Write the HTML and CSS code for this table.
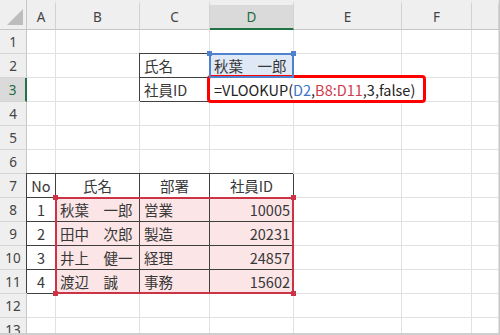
FILE: index.html
```html
<!DOCTYPE html>
<html lang="ja">
<head>
<meta charset="utf-8">
<link rel="stylesheet" href="styles.css">
</head>
<body>
<div class="sheet">
  <div class="grid cells">
    <div class="corner"><svg width="27" height="30" viewBox="0 0 27 30"><polygon points="7,25 23,25 23,9" fill="#bdbdbd"/></svg></div>
    <div class="ch">A</div><div class="ch">B</div><div class="ch">C</div><div class="ch sel">D</div><div class="ch">E</div><div class="ch">F</div><div class="ch"></div>

    <div class="rh">1</div><div class="c"></div><div class="c"></div><div class="c"></div><div class="c"></div><div class="c"></div><div class="c"></div><div class="c"></div>

    <div class="rh">2</div><div class="c"></div><div class="c"></div><div class="c bx">氏名</div><div class="c blu">秋葉　一郎</div><div class="c"></div><div class="c"></div><div class="c"></div>

    <div class="rh sel">3</div><div class="c"></div><div class="c"></div><div class="c bx">社員ID</div><div class="c ovf">=VLOOKUP(<span class="rb">D2</span>,<span class="rr">B8:D11</span>,3,false)</div><div class="c nor"></div><div class="c"></div><div class="c"></div>

    <div class="rh">4</div><div class="c"></div><div class="c"></div><div class="c"></div><div class="c"></div><div class="c"></div><div class="c"></div><div class="c"></div>
    <div class="rh">5</div><div class="c"></div><div class="c"></div><div class="c"></div><div class="c"></div><div class="c"></div><div class="c"></div><div class="c"></div>
    <div class="rh">6</div><div class="c"></div><div class="c"></div><div class="c"></div><div class="c"></div><div class="c"></div><div class="c"></div><div class="c"></div>

    <div class="rh">7</div><div class="c bx ctr">No</div><div class="c bx ctr">氏名</div><div class="c bx ctr">部署</div><div class="c bx ctr">社員ID</div><div class="c"></div><div class="c"></div><div class="c"></div>

    <div class="rh">8</div><div class="c bx ctr">1</div><div class="c bx pk">秋葉　一郎</div><div class="c bx pk">営業</div><div class="c bx pk rt">10005</div><div class="c"></div><div class="c"></div><div class="c"></div>
    <div class="rh">9</div><div class="c bx ctr">2</div><div class="c bx pk">田中　次郎</div><div class="c bx pk">製造</div><div class="c bx pk rt">20231</div><div class="c"></div><div class="c"></div><div class="c"></div>
    <div class="rh">10</div><div class="c bx ctr">3</div><div class="c bx pk">井上　健一</div><div class="c bx pk">経理</div><div class="c bx pk rt">24857</div><div class="c"></div><div class="c"></div><div class="c"></div>
    <div class="rh">11</div><div class="c bx ctr">4</div><div class="c bx pk">渡辺　誠</div><div class="c bx pk">事務</div><div class="c bx pk rt">15602</div><div class="c"></div><div class="c"></div><div class="c"></div>

    <div class="rh">12</div><div class="c"></div><div class="c"></div><div class="c"></div><div class="c"></div><div class="c"></div><div class="c"></div><div class="c"></div>
    <div class="rh">13</div><div class="c"></div><div class="c"></div><div class="c"></div><div class="c"></div><div class="c"></div><div class="c"></div><div class="c"></div>
  </div>

  <div class="grid overlay">
    <div class="rng blue-rng"><span class="h tl"></span><span class="h tr"></span></div>
    <div class="rng red-rng"><span class="h tl"></span><span class="h tr"></span><span class="h bl"></span><span class="h br"></span></div>
    <div class="callout"></div>
  </div>
</div>
</body>
</html>
```
FILE: styles.css
```css
* { box-sizing: border-box; }
html, body { margin: 0; padding: 0; background: #fff; }
body { width: 500px; height: 335px; overflow: hidden; }

.sheet {
  position: relative;
  width: 500px;
  height: 335px;
  overflow: hidden;
  border-right: 1px solid #c8c8c8;
  border-bottom: 2px solid #cfcfcf;
  font-family: "Noto Sans CJK JP", "Noto Sans", sans-serif;
  color: #383838;
}

.grid {
  display: grid;
  grid-template-columns: 27px 29px 84px 70px 84px 108px 70px 27px;
  grid-template-rows: 30px repeat(13, 24px);
}

.corner {
  background: #efefef;
  border-right: 1px solid #c6c6c6;
  border-bottom: 1px solid #c6c6c6;
}
.corner svg { display: block; }

.ch {
  background: #efefef;
  border-top: 5px solid #efefef;
  border-right: 1px solid #d2d2d2;
  border-bottom: 1px solid #c6c6c6;
  font-family: "Noto Sans", sans-serif;
  font-size: 13.5px;
  color: #444;
  display: flex;
  align-items: center;
  justify-content: center;
}
.ch.sel {
  background: #dadada;
  border-top-color: #efefef;
  border-bottom: 2px solid #217346;
  color: #1e6b41;
}

.rh {
  background: #efefef;
  border-right: 1px solid #c6c6c6;
  border-bottom: 1px solid #d6d6d6;
  font-family: "Noto Sans", sans-serif;
  font-size: 13.5px;
  color: #444;
  display: flex;
  align-items: center;
  justify-content: center;
}
.rh.sel {
  background: #dadada;
  border-right: 2px solid #217346;
  color: #1e6b41;
}

.c {
  border-right: 1px solid #e1e1e1;
  border-bottom: 1px solid #e1e1e1;
  padding: 0 3px 0 4px;
  font-size: 14.5px;
  line-height: 23px;
  white-space: nowrap;
  overflow: hidden;
}
.c.bx {
  border-right-color: #404040;
  border-bottom-color: #404040;
  box-shadow: -1px -1px 0 #404040;
}
.c.ctr { text-align: center; padding: 0; }
.c.rt { text-align: right; }
.c.pk { background: #fbe5e6; }
.c.blu { background: #dfe9f6; }
.c.ovf { overflow: visible; border-right-color: transparent; color: #222; }
.c.nor { border-right-color: transparent; }

.rb { color: #3e75c9; }
.rr { color: #cf3d4d; }

.overlay {
  position: absolute;
  left: 0;
  top: 0;
  pointer-events: none;
}

.rng { position: relative; margin: -1px 0 0 -1px; }
.blue-rng {
  grid-column: 5 / 6;
  grid-row: 3 / 4;
  border: 2px solid #4e82cf;
}
.red-rng {
  grid-column: 3 / 6;
  grid-row: 9 / 13;
  border: 2px solid #cc3344;
}
.h {
  position: absolute;
  width: 5px;
  height: 5px;
}
.blue-rng .h { background: #4e82cf; }
.red-rng .h { background: #cc3344; }
.h.tl { left: -4px; top: -4px; }
.h.tr { right: -4px; top: -4px; }
.h.bl { left: -4px; bottom: -4px; }
.h.br { right: -4px; bottom: -4px; }

.callout {
  grid-column: 5 / 6;
  grid-row: 4 / 5;
  justify-self: start;
  align-self: start;
  width: 219px;
  height: 28px;
  margin: -3px 0 0 -3px;
  border: 3px solid #ff0000;
  border-radius: 4px;
}
```
